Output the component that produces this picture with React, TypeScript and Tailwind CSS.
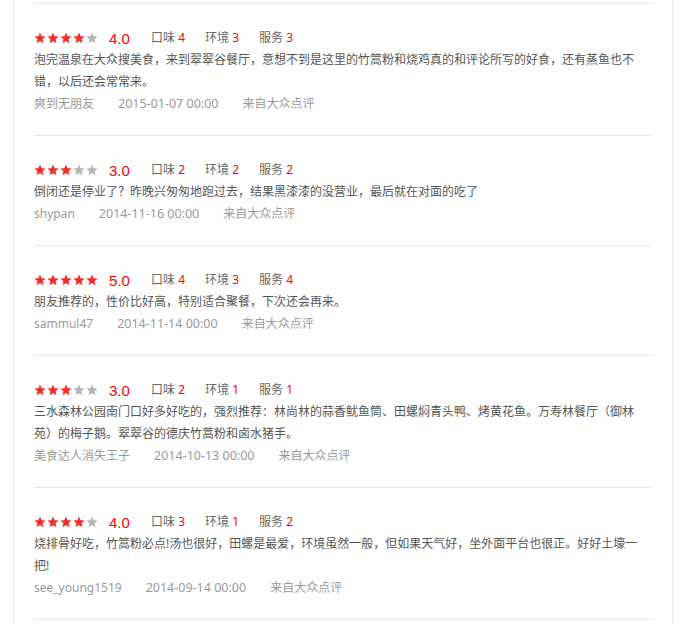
type Review = {
  score: number;
  taste: number;
  env: number;
  service: number;
  text: string;
  user: string;
  date: string;
};

const reviews: Review[] = [
  {
    score: 4,
    taste: 4,
    env: 3,
    service: 3,
    text: "泡完温泉在大众搜美食，来到翠翠谷餐厅，意想不到是这里的竹篙粉和烧鸡真的和评论所写的好食，还有蒸鱼也不错，以后还会常常来。",
    user: "爽到无朋友",
    date: "2015-01-07 00:00",
  },
  {
    score: 3,
    taste: 2,
    env: 2,
    service: 2,
    text: "倒闭还是停业了？昨晚兴匆匆地跑过去，结果黑漆漆的没营业，最后就在对面的吃了",
    user: "shypan",
    date: "2014-11-16 00:00",
  },
  {
    score: 5,
    taste: 4,
    env: 3,
    service: 4,
    text: "朋友推荐的，性价比好高，特别适合聚餐，下次还会再来。",
    user: "sammul47",
    date: "2014-11-14 00:00",
  },
  {
    score: 3,
    taste: 2,
    env: 1,
    service: 1,
    text: "三水森林公园南门口好多好吃的，强烈推荐：林尚林的蒜香鱿鱼筒、田螺焖青头鸭、烤黄花鱼。万寿林餐厅（御林苑）的梅子鹅。翠翠谷的德庆竹蒿粉和卤水猪手。",
    user: "美食达人消失王子",
    date: "2014-10-13 00:00",
  },
  {
    score: 4,
    taste: 3,
    env: 1,
    service: 2,
    text: "烧排骨好吃，竹篙粉必点!汤也很好，田螺是最爱，环境虽然一般，但如果天气好，坐外面平台也很正。好好土壕一把!",
    user: "see_young1519",
    date: "2014-09-14 00:00",
  },
];

function Star({ on }: { on: boolean }) {
  return (
    <svg width="12" height="12" viewBox="0 0 24 24">
      <polygon
        points="12,1 15.1,8.6 23.4,9.2 17,14.5 19,22.6 12,18.2 5,22.6 7,14.5 0.6,9.2 8.9,8.6"
        fill={on ? "#f22a2a" : "#b5b5b5"}
      />
    </svg>
  );
}

function ReviewItem({ r }: { r: Review }) {
  return (
    <div className="border-t border-[#e8e8e8] pt-[23px] pb-[20px]">
      {/* rating row */}
      <div className="flex items-center h-[22px]">
        <div className="flex gap-px">
          {[1, 2, 3, 4, 5].map((i) => (
            <Star key={i} on={i <= r.score} />
          ))}
        </div>
        <span className="ml-[11px] w-[42px] text-[15px] text-[#ff0000] font-['Liberation_Sans',sans-serif] leading-none">
          {r.score.toFixed(1)}
        </span>
        <div className="flex gap-[20px] text-[12px] text-[#666]">
          <span>
            口味 <span className="text-[#ff0000]">{r.taste}</span>
          </span>
          <span>
            环境 <span className="text-[#ff0000]">{r.env}</span>
          </span>
          <span>
            服务 <span className="text-[#ff0000]">{r.service}</span>
          </span>
        </div>
      </div>

      {/* body */}
      <p className="w-[606px] text-[12px] leading-[22px] text-[#555]">{r.text}</p>

      {/* meta */}
      <div className="flex gap-[24px] h-[22px] items-center text-[12px] text-[#999]">
        <span>{r.user}</span>
        <span className="text-[12.5px]">{r.date}</span>
        <span>来自大众点评</span>
      </div>
    </div>
  );
}

export default function App() {
  return (
    <div className="w-[688px] h-[624px] bg-white overflow-hidden font-['Noto_Sans','Noto_Sans_CJK_SC',sans-serif]">
      <div className="ml-[13px] w-[660px] h-full border-x border-[#e6e6e6] px-5 pt-[3px]">
        {reviews.map((r, i) => (
          <ReviewItem key={i} r={r} />
        ))}
        <div className="border-t border-[#e8e8e8]" />
      </div>
    </div>
  );
}
